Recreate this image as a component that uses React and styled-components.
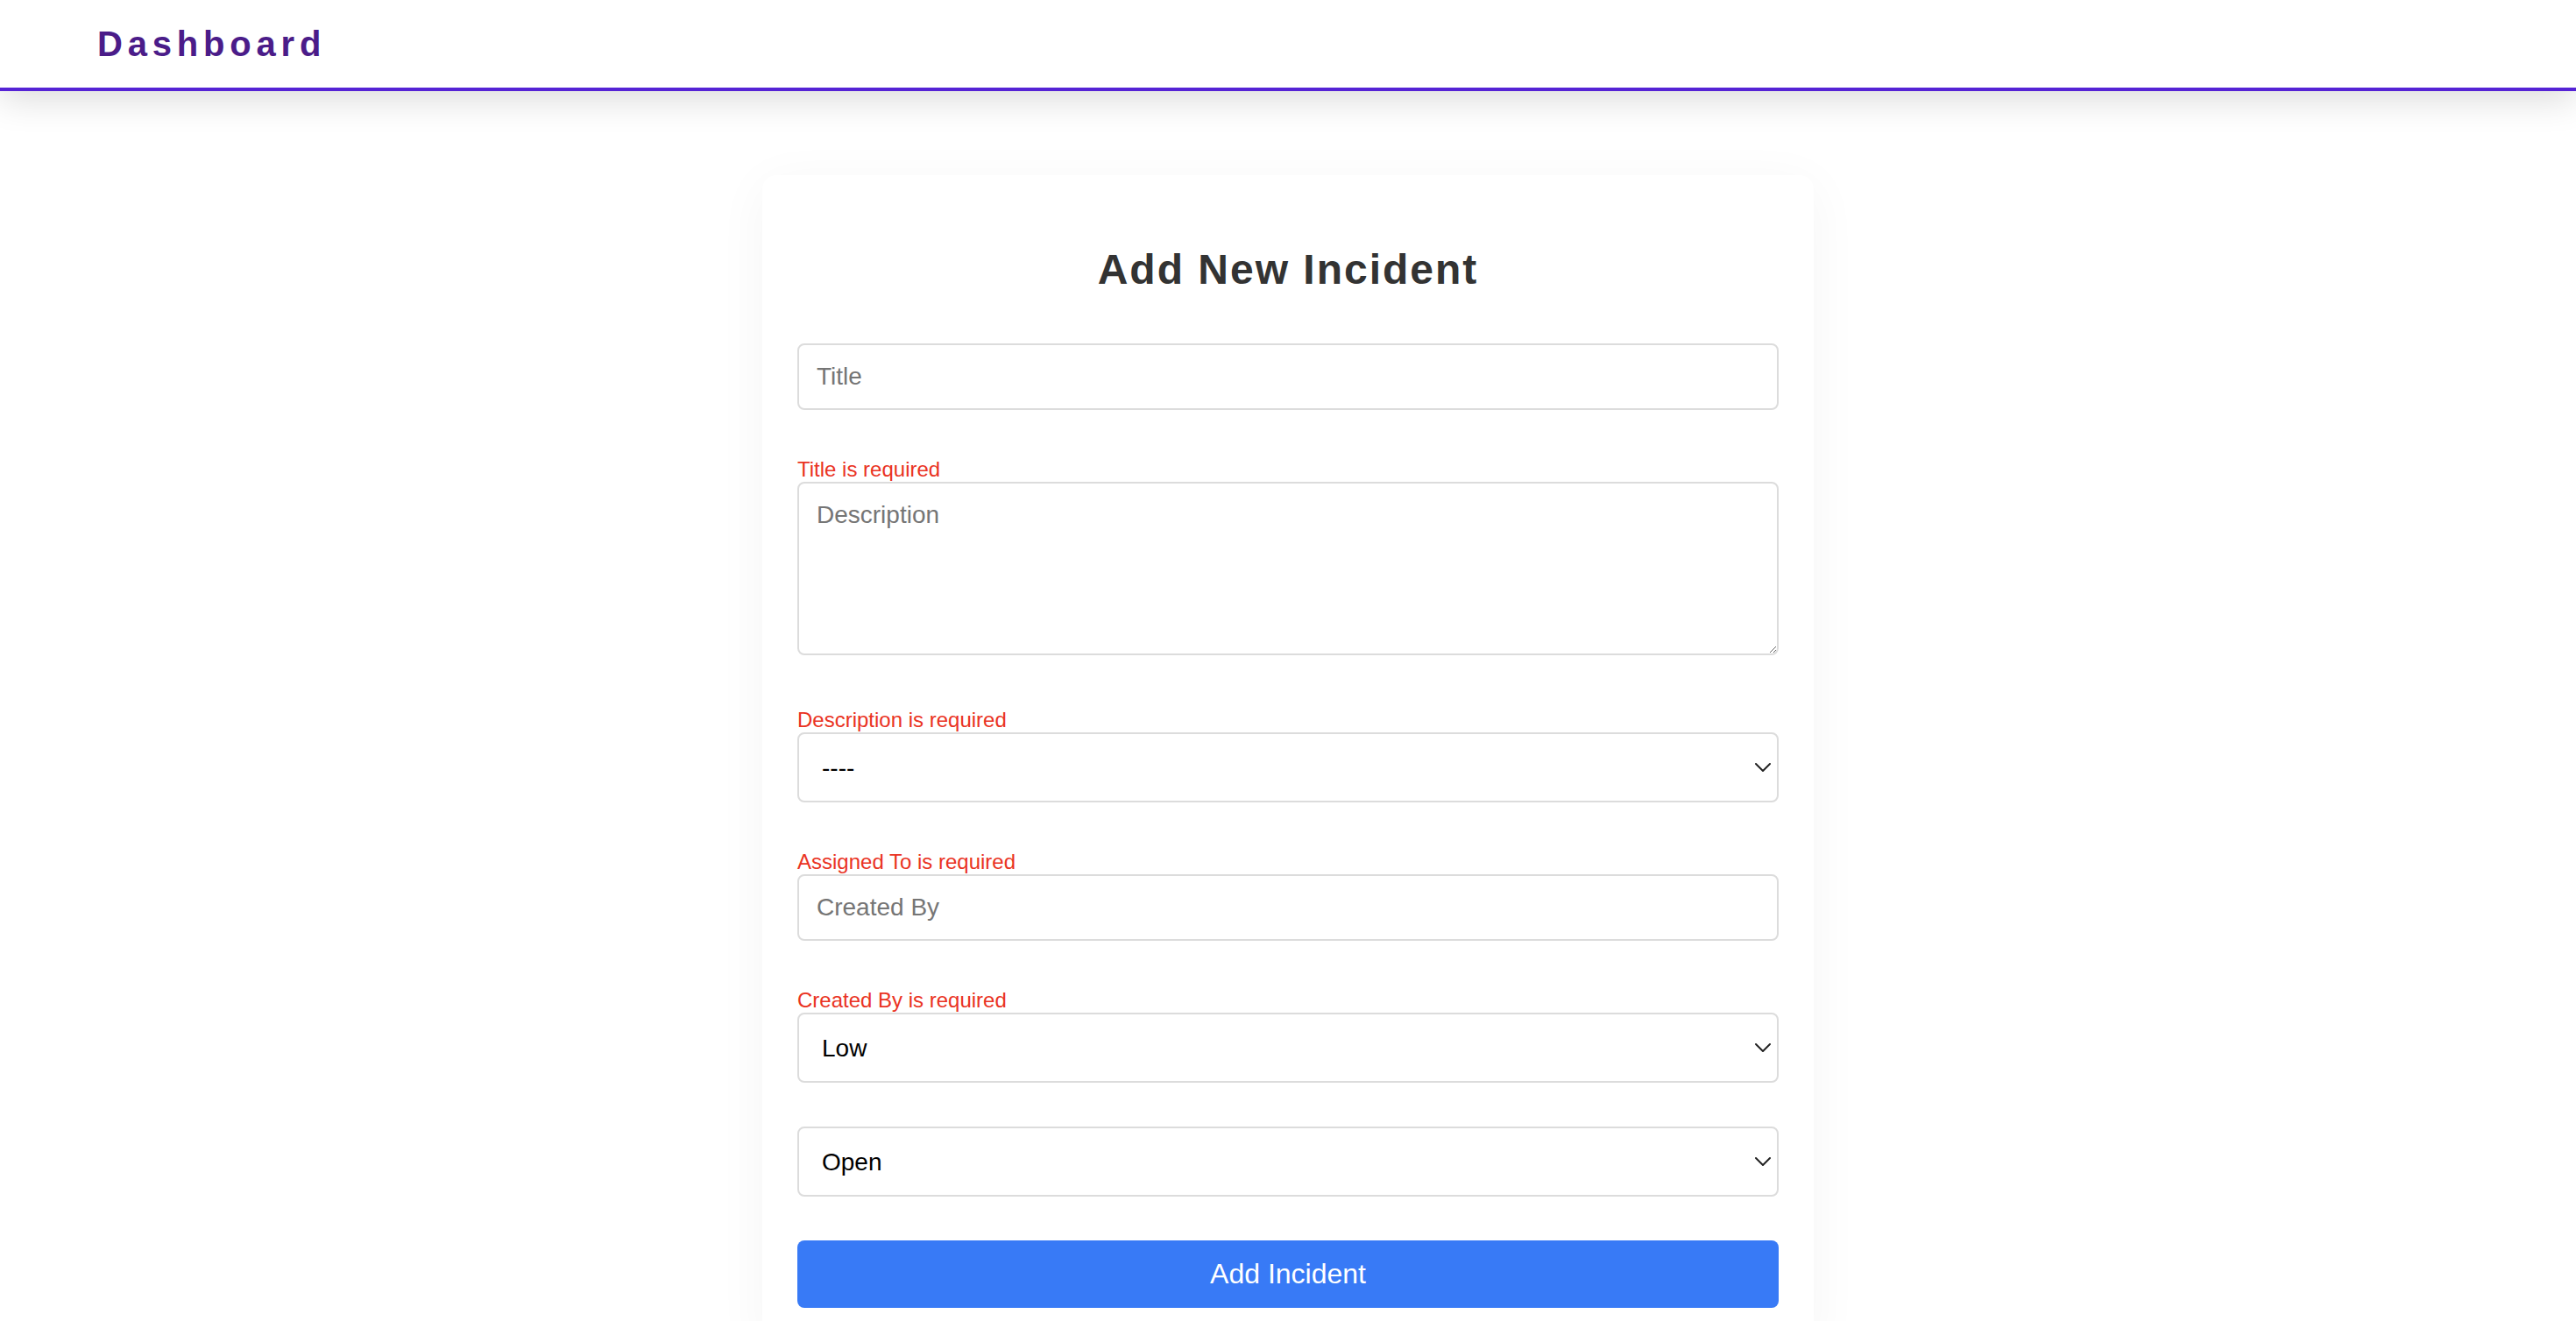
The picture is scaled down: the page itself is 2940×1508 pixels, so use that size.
import React from 'react';
import styled, { createGlobalStyle } from 'styled-components';

const GlobalStyle = createGlobalStyle`
  * { box-sizing: border-box; }
  html, body { margin: 0; padding: 0; background: #ffffff; }
  body { font-family: "Liberation Sans", Arial, Helvetica, sans-serif; }
`;

const Header = styled.header`
  position: relative;
  z-index: 1;
  height: 104px;
  display: flex;
  align-items: center;
  padding: 0 111px;
  background: #ffffff;
  border-bottom: 4px solid #5523d5;
  box-shadow: 0 10px 40px rgba(0, 0, 0, 0.14);
`;

const Brand = styled.h1`
  margin: 0;
  font-size: 40px;
  font-weight: 700;
  letter-spacing: 5.8px;
  color: #4b1c89;
`;

const Main = styled.main`
  display: flex;
  justify-content: center;
  padding-top: 96px;
`;

const Card = styled.section`
  width: 1200px;
  padding: 40px;
  background: #ffffff;
  border-radius: 16px;
  box-shadow: 0 10px 60px rgba(0, 0, 0, 0.045);
`;

const Heading = styled.h2`
  margin: 40px 0 57px;
  text-align: center;
  font-size: 48px;
  font-weight: 700;
  letter-spacing: 2px;
  color: #333333;
`;

const Form = styled.form`
  display: flex;
  flex-direction: column;
`;

const Field = styled.div`
  position: relative;
  margin-bottom: 50px;
`;

const controlBase = `
  display: block;
  width: 100%;
  font-family: "Liberation Sans", Arial, Helvetica, sans-serif;
  font-size: 28px;
  color: #000000;
  background: #ffffff;
  border: 2px solid #dcdcdc;
  border-radius: 8px;
  outline: none;
  &::placeholder { color: #757575; }
`;

const TextInput = styled.input`
  ${controlBase}
  height: 76px;
  padding: 0 20px;
`;

const TextArea = styled.textarea`
  ${controlBase}
  height: 198px;
  padding: 20px;
  margin-bottom: 6px;
  resize: both;
`;

const Select = styled.select`
  ${controlBase}
  height: 80px;
  padding: 0 40px 0 26px;
  appearance: none;
  -webkit-appearance: none;
`;

const Chevron = styled.svg`
  position: absolute;
  right: 9px;
  top: 50%;
  width: 18px;
  height: 10px;
  margin-top: -5px;
  pointer-events: none;
`;

const ErrorText = styled.div`
  padding-top: 4px;
  font-size: 24px;
  line-height: normal;
  color: #ea3323;
`;

const SubmitButton = styled.button`
  width: 100%;
  height: 77px;
  border: none;
  border-radius: 8px;
  background: #387af6;
  color: #ffffff;
  font-family: "Liberation Sans", Arial, Helvetica, sans-serif;
  font-size: 32px;
  cursor: pointer;
`;

function SelectField({ options, defaultValue }) {
  return (
    <Field>
      <Select defaultValue={defaultValue}>
        {options.map((o) => (
          <option key={o} value={o}>{o}</option>
        ))}
      </Select>
      <Chevron viewBox="0 0 18 10" fill="none">
        <path d="M1 1 L9 9 L17 1" stroke="#222" strokeWidth="2" strokeLinecap="round" strokeLinejoin="round" />
      </Chevron>
    </Field>
  );
}

export default function App() {
  return (
    <>
      <GlobalStyle />
      <Header>
        <Brand>Dashboard</Brand>
      </Header>
      <Main>
        <Card>
          <Heading>Add New Incident</Heading>
          <Form onSubmit={(e) => e.preventDefault()}>
            <Field>
              <TextInput placeholder="Title" />
            </Field>
            <ErrorText>Title is required</ErrorText>
            <Field>
              <TextArea placeholder="Description" />
            </Field>
            <ErrorText>Description is required</ErrorText>
            <SelectField options={['----', 'Alice', 'Bob']} defaultValue="----" />
            <ErrorText>Assigned To is required</ErrorText>
            <Field>
              <TextInput placeholder="Created By" />
            </Field>
            <ErrorText>Created By is required</ErrorText>
            <SelectField options={['Low', 'Medium', 'High']} defaultValue="Low" />
            <SelectField options={['Open', 'In Progress', 'Closed']} defaultValue="Open" />
            <SubmitButton type="submit">Add Incident</SubmitButton>
          </Form>
        </Card>
      </Main>
    </>
  );
}
